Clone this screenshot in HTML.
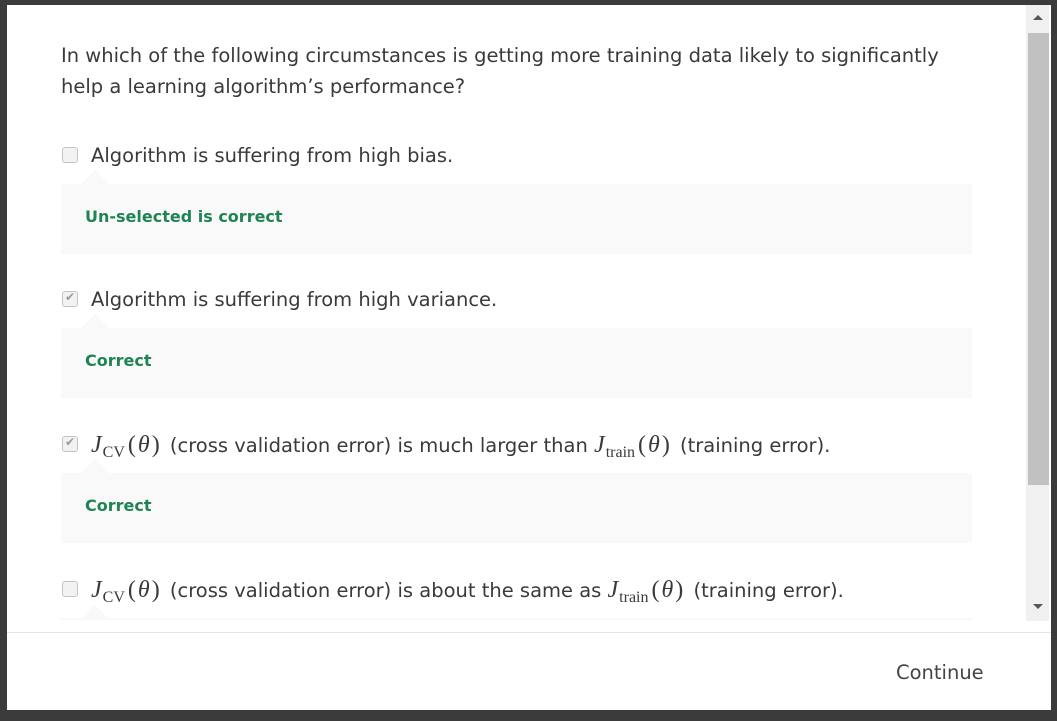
<!DOCTYPE html>
<html><head><style>
body{margin:0;width:1057px;height:721px;background:#3b3b3b;overflow:hidden;font-family:"DejaVu Sans","Liberation Sans",sans-serif;color:#3a3a3a;position:relative}
.modal{position:absolute;left:7px;top:5px;width:1044px;height:705px;background:#fff}
.a{position:absolute}
.q{left:54px;top:35px;font-size:19.5px;line-height:31px;width:890px}
.cb{width:14px;height:14px;border:1px solid #c4c4c4;border-radius:3px;background:#f2f2f2;position:absolute}
.cb.c::after{content:"✔";position:absolute;left:2px;top:-2px;font-size:12px;color:#999}
.opt{font-size:19.5px;position:absolute;left:84px}
.fb{position:absolute;left:54px;width:911px;height:70px;background:#f9f9f9}
.fb span{position:absolute;left:24px;top:23px;color:#1f8354;font-weight:bold;font-size:16px}
.tri{position:absolute;left:74px;width:0;height:0;border-left:14px solid transparent;border-right:14px solid transparent;border-bottom:14px solid #f9f9f9}
.m{font-family:"Liberation Serif",serif;font-style:italic;font-size:24px}
.s{font-family:"Liberation Serif",serif;font-size:16px;font-style:normal;position:relative;top:5px;margin-left:1px;margin-right:3px}
.r{font-family:"Liberation Serif",serif;font-size:24px;margin-right:4px}
.r i{padding:0 2px}
</style></head><body>
<div class="modal">
<div class="a q">In which of the following circumstances is getting more training data likely to significantly help a learning algorithm’s performance?</div>

<div class="cb" style="left:55px;top:142px"></div>
<div class="opt" style="top:139px">Algorithm is suffering from high bias.</div>
<div class="tri" style="top:165px"></div>
<div class="fb" style="top:179px"><span>Un-selected is correct</span></div>

<div class="cb c" style="left:55px;top:286px"></div>
<div class="opt" style="top:283px">Algorithm is suffering from high variance.</div>
<div class="tri" style="top:309px"></div>
<div class="fb" style="top:323px"><span>Correct</span></div>

<div class="cb c" style="left:55px;top:431px"></div>
<div class="opt" style="top:427px"><span class="m">J</span><span class="s">CV</span><span class="r">(<i>θ</i>)</span> (cross validation error) is much larger than <span class="m">J</span><span class="s">train</span><span class="r">(<i>θ</i>)</span> (training error).</div>
<div class="tri" style="top:454px"></div>
<div class="fb" style="top:468px"><span>Correct</span></div>

<div class="cb" style="left:55px;top:576px"></div>
<div class="opt" style="top:572px"><span class="m">J</span><span class="s">CV</span><span class="r">(<i>θ</i>)</span> (cross validation error) is about the same as <span class="m">J</span><span class="s">train</span><span class="r">(<i>θ</i>)</span> (training error).</div>
<div class="tri" style="top:600px"></div>
<div class="a" style="left:54px;top:613px;width:911px;height:2px;background:#f9f9f9"></div>

<div class="a" style="left:1019px;top:0;width:23px;height:616px;background:#f0f0f0"></div>
<div class="a" style="left:1021px;top:28px;width:21px;height:452px;background:#c1c1c1"></div>
<div class="a" style="left:1026px;top:10px;border-left:5px solid transparent;border-right:5px solid transparent;border-bottom:5px solid #555;width:0;height:0"></div>
<div class="a" style="left:1026px;top:599px;border-left:5px solid transparent;border-right:5px solid transparent;border-top:5px solid #555;width:0;height:0"></div>

<div class="a" style="left:0;top:627px;width:1044px;height:1px;background:#e6e6e6"></div>
<div class="a" style="left:889px;top:656px;font-size:19.5px;color:#444">Continue</div>
</div>
</body></html>
